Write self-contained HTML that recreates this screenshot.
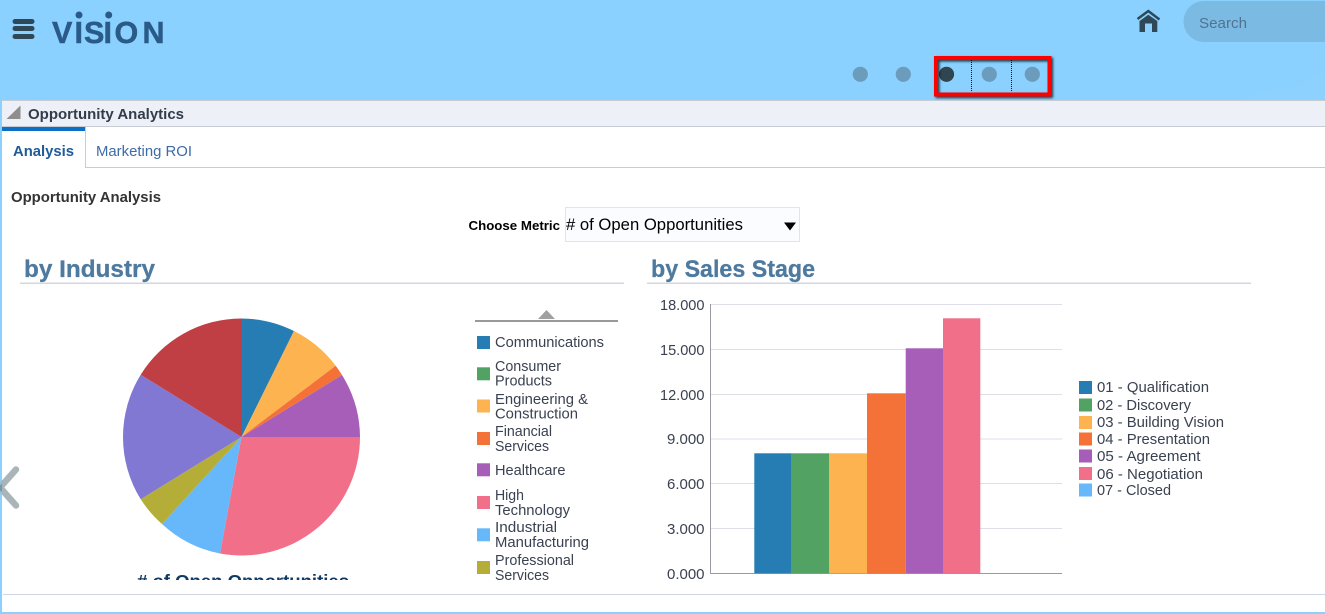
<!DOCTYPE html>
<html lang="en"><head><meta charset="utf-8"><title>Opportunity Analytics</title>
<style>
html,body{margin:0;padding:0;width:1325px;height:614px;overflow:hidden;background:#fff}
svg{position:absolute;left:0;top:0;display:block}
.l{font:14.7px "Liberation Sans",sans-serif;fill:#3a4150}
.h{font:bold 24px "Liberation Sans",sans-serif;fill:#4e7a9f;stroke:#4e7a9f;stroke-width:.3}
.s{font-family:"Liberation Sans",sans-serif}
</style></head><body>
<svg width="1325" height="614" viewBox="0 0 1325 614" xmlns="http://www.w3.org/2000/svg">
<defs><filter id="sh" x="-20%" y="-30%" width="140%" height="160%"><feDropShadow dx="1.5" dy="1.5" stdDeviation="1.2" flood-color="#000" flood-opacity=".75"/></filter></defs>
<!-- header -->
<rect width="1325" height="614" fill="#8ad1ff"/>
<path d="M1240 100C1262 92 1282 85 1300 87C1307 80 1316 74 1325 72V100Z" fill="#8dd2ff"/>
<g fill="#2f4858"><rect x="12.500" y="19" width="22" height="5" rx="2.500"/><rect x="12.500" y="26" width="22" height="5" rx="2.500"/><rect x="12.500" y="34" width="22" height="5" rx="2.500"/></g>
<text class="s" x="52 74.500 84 103.500 114.500 142.500" y="43" font-size="30.500" font-weight="bold" fill="#2a5a88" stroke="#2a5a88" stroke-width=".5">VISION</text>
<circle cx="79" cy="15" r="3.500" fill="#2a5a88"/><circle cx="108.700" cy="15" r="3.500" fill="#2a5a88"/>
<path d="M1137.500 19L1148.300 11L1159.500 19.500" fill="none" stroke="#2f4858" stroke-width="2.500"/>
<path d="M1148.300 14.800L1157.300 21V32H1152V23.500H1145V32H1139.500V21Z" fill="#2f4858"/>
<path d="M1204 1H1325V42H1204A20.500 20.500 0 0 1 1204 1Z" fill="#7bbbe3"/>
<text class="s" x="1199" y="28" font-size="15" fill="#4f7390" textLength="48" lengthAdjust="spacingAndGlyphs">Search</text>
<g fill="#6c9cbc"><circle cx="860.300" cy="74.300" r="7.600"/><circle cx="903.300" cy="74.300" r="7.600"/><circle cx="989.300" cy="74.300" r="7.600"/><circle cx="1032.300" cy="74.300" r="7.600"/></g>
<circle cx="946.500" cy="74.300" r="7.600" fill="#2f4550"/>
<rect x="936" y="58" width="113.500" height="36.500" fill="none" stroke="#f00" stroke-width="4" filter="url(#sh)"/>
<path d="M971.500 60V92M1011.500 60V92" stroke="#111" stroke-width="1" stroke-dasharray="1 1"/>
<!-- panel -->
<rect x="2" y="100" width="1323" height="512" fill="#fff"/>
<rect x="2" y="100" width="1323" height="26" fill="#edf0f6"/>
<rect x="2" y="100" width="1323" height="1" fill="#c5ccd6"/>
<rect x="2" y="126" width="1323" height="1" fill="#c5ccd6"/>
<path d="M6.500 119L20.500 105.500V119Z" fill="#8e8e8e"/>
<text class="s" x="28" y="119" font-size="15" font-weight="bold" fill="#333c4a" textLength="156" lengthAdjust="spacingAndGlyphs">Opportunity Analytics</text>
<rect x="2" y="127" width="83.500" height="4" fill="#0b6fc7"/>
<rect x="85" y="127" width="1" height="40" fill="#c5ccd6"/>
<rect x="85" y="167" width="1240" height="1" fill="#c5ccd6"/>
<text class="s" x="13" y="156" font-size="15" font-weight="bold" fill="#1f5a99" textLength="61" lengthAdjust="spacingAndGlyphs">Analysis</text>
<text class="s" x="96" y="156" font-size="15" fill="#3d6aa8" textLength="96" lengthAdjust="spacingAndGlyphs">Marketing ROI</text>
<text class="s" x="11" y="202" font-size="14.500" font-weight="bold" fill="#333" textLength="150" lengthAdjust="spacingAndGlyphs">Opportunity Analysis</text>
<text class="s" x="468.500" y="230" font-size="13" font-weight="bold" fill="#000" textLength="91.500" lengthAdjust="spacingAndGlyphs">Choose Metric</text>
<rect x="565.500" y="207.500" width="234" height="34" fill="#fbfcff" stroke="#e2e4e8"/>
<text class="s" x="566" y="230" font-size="16.500" fill="#000" textLength="177" lengthAdjust="spacingAndGlyphs"># of Open Opportunities</text>
<path d="M784 222.500H796L790 230.500Z" fill="#000"/>
<text class="h" x="24" y="277" textLength="131" lengthAdjust="spacingAndGlyphs">by Industry</text>
<text class="h" x="651" y="277" textLength="164" lengthAdjust="spacingAndGlyphs">by Sales Stage</text>
<rect x="20" y="282.500" width="604" height="1.500" fill="#d5d6e0"/>
<rect x="647" y="282.500" width="604" height="1.500" fill="#d5d6e0"/>
<!-- pie -->
<g>
<path d="M241.500 437V318.500A118.500 118.500 0 0 1 294 331Z" fill="#267db3"/>
<path d="M241.500 437L294 331A118.500 118.500 0 0 1 335.700 365.700Z" fill="#fdb34f"/>
<path d="M241.500 437L335.700 365.700A118.500 118.500 0 0 1 342 375Z" fill="#f47237"/>
<path d="M241.500 437L342 375A118.500 118.500 0 0 1 360 437Z" fill="#a65eb8"/>
<path d="M241.500 437H360A118.500 118.500 0 0 1 220 553.500Z" fill="#f16f88"/>
<path d="M241.500 437L220 553.500A118.500 118.500 0 0 1 162 524Z" fill="#66b8fb"/>
<path d="M241.500 437L162 524A118.500 118.500 0 0 1 140.700 499.300Z" fill="#b4ae39"/>
<path d="M241.500 437L140.700 499.300A118.500 118.500 0 0 1 140.700 374.700Z" fill="#8078d2"/>
<path d="M241.500 437L140.700 374.700A118.500 118.500 0 0 1 241.500 318.500Z" fill="#bf3f45"/>
</g>
<text class="s" x="137" y="587" font-size="17.500" font-weight="bold" fill="#0f3a63" textLength="212" lengthAdjust="spacingAndGlyphs"># of Open Opportunities</text>
<rect x="100" y="580" width="300" height="14" fill="#fff"/>
<!-- left legend -->
<rect x="475" y="320" width="143" height="2" fill="#999"/>
<path d="M546.500 310L555 319H538Z" fill="#a0a0a0"/>
<rect x="477" y="336" width="13" height="13" fill="#267db3"/>
<rect x="477" y="367.300" width="13" height="13" fill="#52a363"/>
<rect x="477" y="399.500" width="13" height="13" fill="#fdb34f"/>
<rect x="477" y="432" width="13" height="13" fill="#f47237"/>
<rect x="477" y="463.300" width="13" height="13" fill="#a65eb8"/>
<rect x="477" y="496" width="13" height="13" fill="#f16f88"/>
<rect x="477" y="528.300" width="13" height="13" fill="#66b8fb"/>
<rect x="477" y="561" width="13" height="13" fill="#b4ae39"/>
<text class="l" x="495" y="347" textLength="109" lengthAdjust="spacingAndGlyphs">Communications</text>
<text class="l" x="495" y="371" textLength="66" lengthAdjust="spacingAndGlyphs">Consumer</text>
<text class="l" x="495" y="385.500" textLength="57" lengthAdjust="spacingAndGlyphs">Products</text>
<text class="l" x="495" y="404" textLength="93" lengthAdjust="spacingAndGlyphs">Engineering &amp;</text>
<text class="l" x="495" y="418.500" textLength="83" lengthAdjust="spacingAndGlyphs">Construction</text>
<text class="l" x="495" y="436" textLength="57" lengthAdjust="spacingAndGlyphs">Financial</text>
<text class="l" x="495" y="451" textLength="54" lengthAdjust="spacingAndGlyphs">Services</text>
<text class="l" x="495" y="475" textLength="70.500" lengthAdjust="spacingAndGlyphs">Healthcare</text>
<text class="l" x="495" y="500" textLength="29" lengthAdjust="spacingAndGlyphs">High</text>
<text class="l" x="495" y="515" textLength="75" lengthAdjust="spacingAndGlyphs">Technology</text>
<text class="l" x="495" y="532" textLength="62" lengthAdjust="spacingAndGlyphs">Industrial</text>
<text class="l" x="495" y="547" textLength="94" lengthAdjust="spacingAndGlyphs">Manufacturing</text>
<text class="l" x="495" y="565" textLength="79" lengthAdjust="spacingAndGlyphs">Professional</text>
<text class="l" x="495" y="580" textLength="54" lengthAdjust="spacingAndGlyphs">Services</text>
<!-- bar chart -->
<g fill="#dedde8"><rect x="710" y="304" width="352" height="1"/><rect x="710" y="349" width="352" height="1"/><rect x="710" y="394" width="352" height="1"/><rect x="710" y="438.500" width="352" height="1"/><rect x="710" y="483" width="352" height="1"/><rect x="710" y="528" width="352" height="1"/></g>
<rect x="710" y="304" width="1" height="270" fill="#9a9aa2"/>
<rect x="710" y="573" width="352" height="1" fill="#9a9aa2"/>
<rect x="754.300" y="453.300" width="37.400" height="120" fill="#267db3"/>
<rect x="791.700" y="453.300" width="37.600" height="120" fill="#52a363"/>
<rect x="829.300" y="453.300" width="37.700" height="120" fill="#fdb34f"/>
<rect x="867" y="393.300" width="38.700" height="180" fill="#f47237"/>
<rect x="905.700" y="348.300" width="37.300" height="225" fill="#a65eb8"/>
<rect x="943" y="318.300" width="37.300" height="255" fill="#f16f88"/>
<text class="l" x="660" y="310" textLength="44.500" lengthAdjust="spacingAndGlyphs">18.000</text>
<text class="l" x="660" y="355" textLength="44.500" lengthAdjust="spacingAndGlyphs">15.000</text>
<text class="l" x="660" y="400" textLength="44.500" lengthAdjust="spacingAndGlyphs">12.000</text>
<text class="l" x="667" y="444" textLength="37.500" lengthAdjust="spacingAndGlyphs">9.000</text>
<text class="l" x="667" y="489" textLength="37.500" lengthAdjust="spacingAndGlyphs">6.000</text>
<text class="l" x="667" y="534" textLength="37.500" lengthAdjust="spacingAndGlyphs">3.000</text>
<text class="l" x="667" y="579" textLength="37.500" lengthAdjust="spacingAndGlyphs">0.000</text>
<!-- right legend -->
<rect x="1079" y="381" width="13" height="13" fill="#267db3"/>
<rect x="1079" y="398.500" width="13" height="13" fill="#52a363"/>
<rect x="1079" y="416" width="13" height="13" fill="#fdb34f"/>
<rect x="1079" y="432.500" width="13" height="13" fill="#f47237"/>
<rect x="1079" y="449.500" width="13" height="13" fill="#a65eb8"/>
<rect x="1079" y="467" width="13" height="13" fill="#f16f88"/>
<rect x="1079" y="483.500" width="13" height="13" fill="#66b8fb"/>
<text class="l" x="1097" y="392" textLength="112" lengthAdjust="spacingAndGlyphs">01 - Qualification</text>
<text class="l" x="1097" y="410" textLength="94" lengthAdjust="spacingAndGlyphs">02 - Discovery</text>
<text class="l" x="1097" y="427" textLength="127" lengthAdjust="spacingAndGlyphs">03 - Building Vision</text>
<text class="l" x="1097" y="444" textLength="113" lengthAdjust="spacingAndGlyphs">04 - Presentation</text>
<text class="l" x="1097" y="461" textLength="103.500" lengthAdjust="spacingAndGlyphs">05 - Agreement</text>
<text class="l" x="1097" y="479" textLength="106" lengthAdjust="spacingAndGlyphs">06 - Negotiation</text>
<text class="l" x="1097" y="495" textLength="74" lengthAdjust="spacingAndGlyphs">07 - Closed</text>
<!-- borders -->
<rect x="0" y="100" width="2" height="514" fill="#8ad1ff"/>
<rect x="3" y="594" width="1322" height="1" fill="#cdd5e6"/>
<rect x="0" y="612" width="1325" height="2" fill="#8ad1ff"/>
<!-- chevron -->
<path d="M16 469.500L0 487.500L16 505.500" fill="none" stroke="#a9b5b8" stroke-width="6.500" stroke-linecap="round" stroke-linejoin="round"/>
<path d="M2 483.500L0 485.500V491L2 491.500Z" fill="#6f9cb0"/>
</svg>
</body></html>
